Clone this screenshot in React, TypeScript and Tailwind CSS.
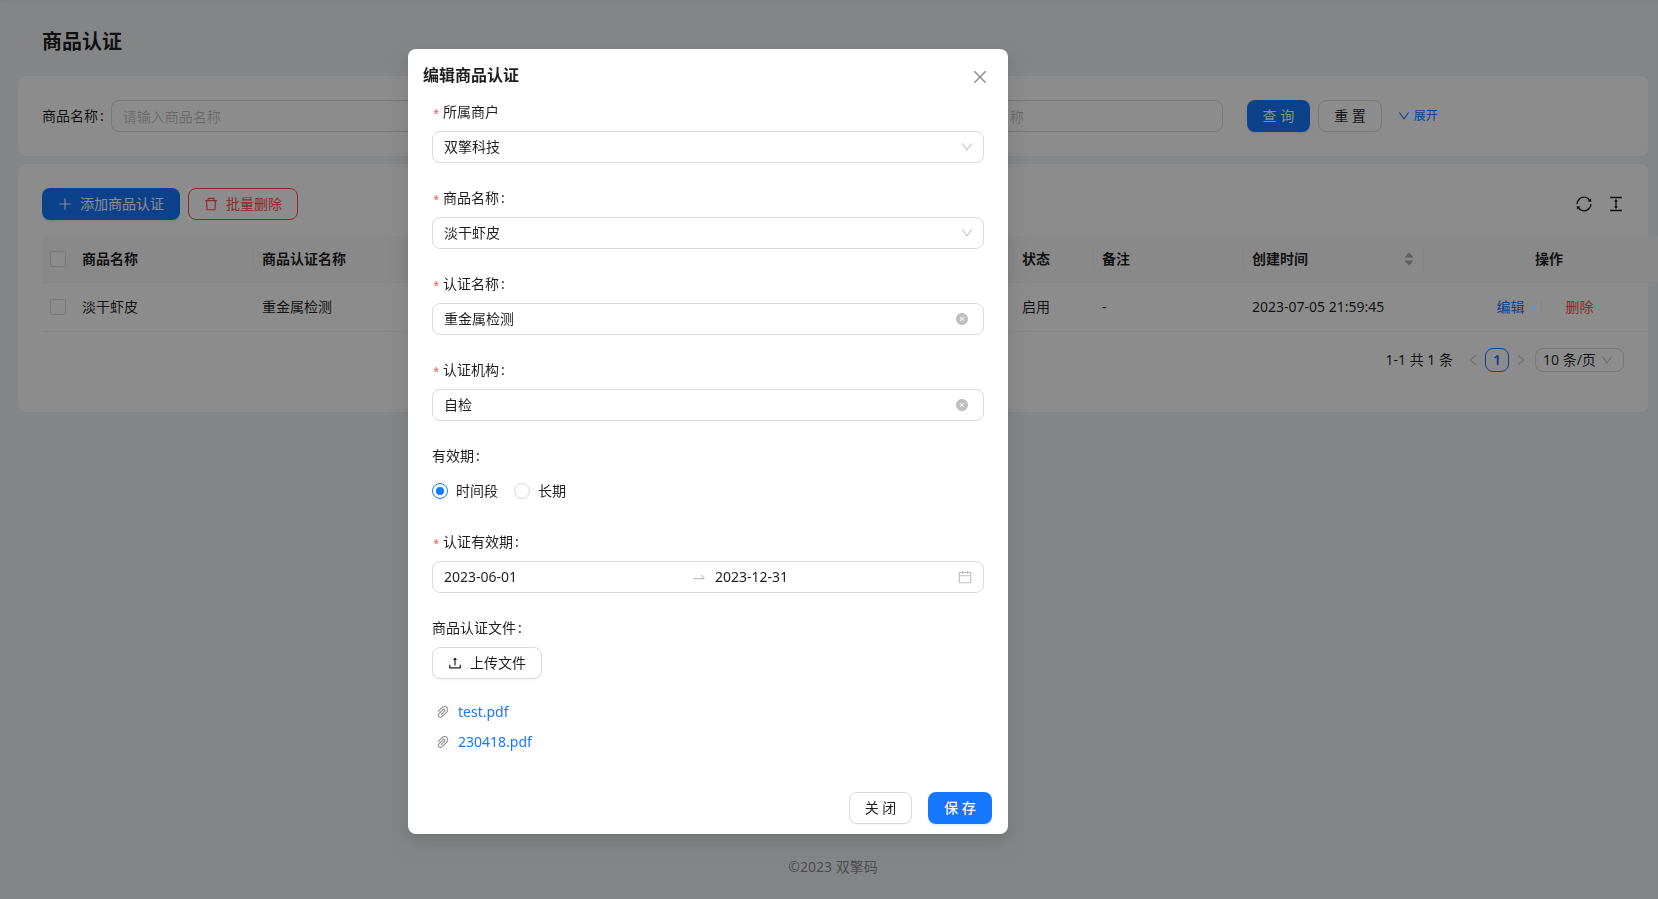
import React, { useState } from 'react';
import {
  AiFillCloseCircle,
  AiOutlineCalendar,
  AiFillCaretDown,
  AiFillCaretUp,
  AiOutlineClose,
  AiOutlineColumnHeight,
  AiOutlineDelete,
  AiOutlineDown,
  AiOutlineLeft,
  AiOutlinePaperClip,
  AiOutlinePlus,
  AiOutlineRight,
  AiOutlineSwapRight,
  AiOutlineSync,
  AiOutlineUpload,
} from 'react-icons/ai';

const ICON_BOX = '64 64 896 896'; // trims the blank rim of the outline icons

const primaryBtn =
  'h-8 px-4 rounded-lg bg-[#1677ff] text-white whitespace-nowrap shadow-[0_2px_0_rgba(5,145,255,0.1)]';
const defaultBtn =
  'h-8 px-[15px] rounded-lg border border-[#d9d9d9] bg-white whitespace-nowrap shadow-[0_2px_0_rgba(0,0,0,0.02)]';
const checkbox = 'block w-4 h-4 appearance-none rounded-xs border border-[#d9d9d9] bg-white checked:bg-[#1677ff]';
const searchInput =
  'flex-1 min-w-0 h-8 px-[11px] rounded-lg border border-[#d9d9d9] bg-white outline-none placeholder:text-black/25';

const FILES = ['test.pdf', '230418.pdf'];

interface SearchFieldProps {
  id: string;
  label: string;
  placeholder: string;
}

function SearchField({ id, label, placeholder }: SearchFieldProps) {
  return (
    <div className="flex items-center">
      <label htmlFor={id} className="shrink-0 mr-[7px]">
        {label}
        <span className="ml-[2px]">:</span>
      </label>
      <input id={id} placeholder={placeholder} className={searchInput} />
    </div>
  );
}

interface FormItemProps {
  label: string;
  htmlFor?: string;
  required?: boolean;
  colon?: boolean;
  children: React.ReactNode;
}

function FormItem({ label, htmlFor, required, colon = true, children }: FormItemProps) {
  return (
    <div className="mb-6">
      <label htmlFor={htmlFor} className="flex h-[22px] mb-2">
        {required && (
          <span className="w-[7px] mr-1 leading-[30px] text-[#ff4d4f] font-['Liberation_Mono',monospace]">*</span>
        )}
        {label}
        {colon && <span className="ml-[2px]">:</span>}
      </label>
      {children}
    </div>
  );
}

function SelectBox({ id, value }: { id: string; value: string }) {
  return (
    <div className="relative">
      <select
        id={id}
        className="block w-full h-8 px-[11px] appearance-none rounded-lg border border-[#d9d9d9] bg-white outline-none"
      >
        <option>{value}</option>
      </select>
      <AiOutlineDown
        size={12}
        viewBox={ICON_BOX}
        className="absolute right-[11px] top-[10px] text-black/25 pointer-events-none"
      />
    </div>
  );
}

function ClearableInput({ id, initial }: { id: string; initial: string }) {
  const [value, setValue] = useState(initial);
  return (
    <div className="flex items-center h-8 pl-[11px] pr-[15px] rounded-lg border border-[#d9d9d9]">
      <input
        id={id}
        value={value}
        onChange={e => setValue(e.target.value)}
        className="flex-1 min-w-0 outline-none"
      />
      <button type="button" aria-label="清除" onClick={() => setValue('')} className="text-black/25">
        <AiFillCloseCircle size={12} viewBox={ICON_BOX} />
      </button>
    </div>
  );
}

function EditModal({ onClose }: { onClose: () => void }) {
  const [period, setPeriod] = useState('range');

  const radio =
    "w-4 h-4 mr-2 appearance-none rounded-full border border-[#d9d9d9] grid place-items-center checked:border-[#1677ff] checked:before:content-[''] checked:before:w-2 checked:before:h-2 checked:before:rounded-full checked:before:bg-[#1677ff]";

  return (
    <div className="fixed inset-0 bg-black/45 overflow-auto">
      <div
        role="dialog"
        aria-label="编辑商品认证"
        className="w-[600px] ml-[408px] mt-[49px] rounded-lg bg-white shadow-[0_6px_16px_0_rgba(0,0,0,0.08),0_3px_6px_-4px_rgba(0,0,0,0.12),0_9px_28px_8px_rgba(0,0,0,0.05)]"
      >
        <div className="flex items-start justify-between pt-[14px] pl-[15px] pr-5">
          <h2 className="text-base leading-6 font-semibold">编辑商品认证</h2>
          <button type="button" aria-label="关闭" onClick={onClose} className="mt-[6px] text-black/45">
            <AiOutlineClose size={16} viewBox={ICON_BOX} />
          </button>
        </div>

        <form className="px-6 pt-[14px]">
          <FormItem label="所属商户" htmlFor="merchant" required colon={false}>
            <SelectBox id="merchant" value="双擎科技" />
          </FormItem>
          <FormItem label="商品名称" htmlFor="product" required>
            <SelectBox id="product" value="淡干虾皮" />
          </FormItem>
          <FormItem label="认证名称" htmlFor="cert-name" required>
            <ClearableInput id="cert-name" initial="重金属检测" />
          </FormItem>
          <FormItem label="认证机构" htmlFor="cert-org" required>
            <ClearableInput id="cert-org" initial="自检" />
          </FormItem>
          <FormItem label="有效期">
            <div className="flex items-center gap-4 h-8">
              <label className="flex items-center">
                <input
                  type="radio"
                  name="period"
                  checked={period === 'range'}
                  onChange={() => setPeriod('range')}
                  className={radio}
                />
                时间段
              </label>
              <label className="flex items-center">
                <input
                  type="radio"
                  name="period"
                  checked={period === 'long'}
                  onChange={() => setPeriod('long')}
                  className={radio}
                />
                长期
              </label>
            </div>
          </FormItem>
          <FormItem label="认证有效期" htmlFor="start-date" required>
            <div className="flex items-center h-8 px-[11px] rounded-lg border border-[#d9d9d9]">
              <input id="start-date" defaultValue="2023-06-01" className="flex-1 min-w-0 outline-none" />
              <AiOutlineSwapRight size={16} className="mx-2 text-black/25" />
              <input aria-label="结束日期" defaultValue="2023-12-31" className="flex-1 min-w-0 outline-none" />
              <AiOutlineCalendar size={14} viewBox={ICON_BOX} className="ml-1 text-black/25" />
            </div>
          </FormItem>
          <div>
            <div className="mb-2">
              商品认证文件<span className="ml-[2px]">:</span>
            </div>
            <button type="button" className={`${defaultBtn} flex items-center gap-2`}>
              <AiOutlineUpload size={14} viewBox={ICON_BOX} />
              上传文件
            </button>
            <ul className="mt-[22px] space-y-2">
              {FILES.map(name => (
                <li key={name} className="flex items-center pl-1">
                  <AiOutlinePaperClip size={14} viewBox={ICON_BOX} className="mr-2 text-black/45" />
                  <a href="#" className="text-[#1677ff]">{name}</a>
                </li>
              ))}
            </ul>
          </div>
        </form>

        <div className="flex justify-end gap-4 pt-[39px] pb-[10px] pr-4">
          <button type="button" onClick={onClose} className={defaultBtn}>关 闭</button>
          <button type="button" className={`${primaryBtn} font-medium`}>保 存</button>
        </div>
      </div>
    </div>
  );
}

function HeadCell({ children }: { children: React.ReactNode }) {
  return (
    <div className="flex items-center justify-between">
      {children}
      <i className="w-px h-[22px] -mr-2 bg-[#f0f0f0]" />
    </div>
  );
}

export default function App() {
  const [open, setOpen] = useState(true);

  return (
    <div className="min-h-screen overflow-hidden bg-[#f0f2f5] shadow-[inset_0_2px_2px_rgba(0,0,0,0.04)] text-sm leading-[22px] text-black/88 font-['Noto_Sans','Noto_Sans_CJK_SC',sans-serif]">
      <h1 className="px-[42px] pt-[26px] pb-[18px] text-xl leading-8 font-semibold">商品认证</h1>

      <main className="ml-[18px] mr-[10px]">
        <form className="grid grid-cols-4 gap-6 p-6 rounded-lg bg-white">
          <SearchField id="q-product" label="商品名称" placeholder="请输入商品名称" />
          <input aria-label="认证机构" className={searchInput} />
          <SearchField id="q-cert" label="认证名称" placeholder="请输入认证名称" />
          <div className="flex items-center gap-2">
            <button type="button" className={primaryBtn}>查 询</button>
            <button type="button" className={defaultBtn}>重 置</button>
            <a href="#" className="flex items-center gap-1 ml-2 text-xs text-[#1677ff]">
              <AiOutlineDown size={12} viewBox={ICON_BOX} />
              展开
            </a>
          </div>
        </form>

        <section className="mt-2 p-6 pb-10 rounded-lg bg-white">
          <div className="flex items-center gap-2">
            <button type="button" className={`${primaryBtn} flex items-center gap-2`}>
              <AiOutlinePlus size={14} viewBox={ICON_BOX} />
              添加商品认证
            </button>
            <button
              type="button"
              className="flex items-center gap-2 h-8 px-[15px] rounded-lg border border-[#ff4d4f] text-[#ff4d4f]"
            >
              <AiOutlineDelete size={14} viewBox={ICON_BOX} />
              批量删除
            </button>
            <div className="flex gap-4 ml-auto">
              <button type="button" aria-label="刷新">
                <AiOutlineSync size={16} viewBox={ICON_BOX} />
              </button>
              <button type="button" aria-label="密度">
                <AiOutlineColumnHeight size={16} viewBox={ICON_BOX} />
              </button>
            </div>
          </div>

          {/* the table is wider than its card, so the last column runs past the edge */}
          <table className="mt-4 w-[calc(100%+50px)] table-fixed border-separate border-spacing-0 text-left">
            <colgroup>
              <col className="w-8" />
              <col className="w-[180px]" />
              <col />
              <col className="w-20" />
              <col className="w-[150px]" />
              <col className="w-[180px]" />
              <col className="w-[250px]" />
            </colgroup>
            <thead>
              <tr className="h-[47px] bg-[#fafafa] *:border-b *:border-[#f0f0f0] *:px-2 *:font-semibold">
                <th className="rounded-tl-lg"><input type="checkbox" aria-label="全选" className={checkbox} /></th>
                <th><HeadCell>商品名称</HeadCell></th>
                <th><HeadCell>商品认证名称</HeadCell></th>
                <th><HeadCell>状态</HeadCell></th>
                <th><HeadCell>备注</HeadCell></th>
                <th>
                  <HeadCell>
                    创建时间
                    <button type="button" aria-label="排序" className="ml-auto mr-2 text-black/30">
                      <AiFillCaretUp size={12} />
                      <AiFillCaretDown size={12} className="-mt-1" />
                    </button>
                  </HeadCell>
                </th>
                <th className="text-center">操作</th>
              </tr>
            </thead>
            <tbody>
              <tr className="h-[49px] *:border-b *:border-[#f0f0f0] *:px-2">
                <td><input type="checkbox" aria-label="选择 淡干虾皮" className={checkbox} /></td>
                <td>淡干虾皮</td>
                <td>重金属检测</td>
                <td>启用</td>
                <td>-</td>
                <td>2023-07-05 21:59:45</td>
                <td>
                  <div className="flex items-center justify-center pr-2">
                    <button type="button" onClick={() => setOpen(true)} className="text-[#1677ff]">编辑</button>
                    <i className="w-px h-3 ml-4 mr-6 bg-black/6" />
                    <button type="button" className="text-[#ff4d4f]">删除</button>
                  </div>
                </td>
              </tr>
            </tbody>
          </table>

          <div className="flex items-center justify-end h-6 mt-4">
            <span className="mr-2">1-1 共 1 条</span>
            <button type="button" aria-label="上一页" className="grid place-items-center w-6 h-6 text-black/25">
              <AiOutlineLeft size={12} viewBox={ICON_BOX} />
            </button>
            <button
              type="button"
              className="w-6 h-6 leading-[22px] rounded-lg border border-[#1677ff] text-[#1677ff] font-semibold"
            >
              1
            </button>
            <button type="button" aria-label="下一页" className="grid place-items-center w-6 h-6 text-black/25">
              <AiOutlineRight size={12} viewBox={ICON_BOX} />
            </button>
            <div className="relative ml-[2px]">
              <select
                aria-label="每页条数"
                className="block w-[89px] h-6 pl-[7px] appearance-none rounded-lg border border-[#d9d9d9] bg-white outline-none"
              >
                <option>10 条/页</option>
              </select>
              <AiOutlineDown
                size={12}
                viewBox={ICON_BOX}
                className="absolute right-[11px] top-[6px] text-black/25 pointer-events-none"
              />
            </div>
          </div>
        </section>
      </main>

      <footer className="ml-[18px] mr-[10px] mt-[444px] pb-5 text-center text-black/45">©2023 双擎码</footer>

      {open && <EditModal onClose={() => setOpen(false)} />}
    </div>
  );
}
